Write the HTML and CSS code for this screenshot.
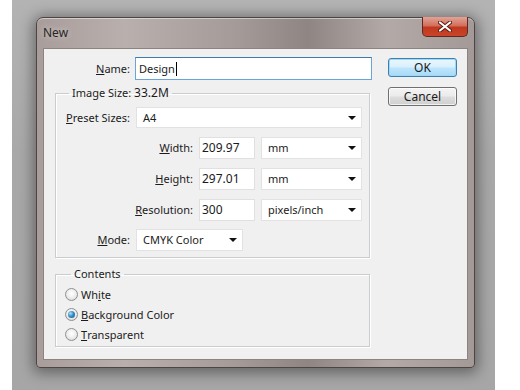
FILE: index.html
```html
<!DOCTYPE html>
<html lang="en">
<head>
  <meta charset="UTF-8">
  <title>New</title>
  <link rel="stylesheet" href="styles.css">
</head>
<body>
  <div class="desktop">
    <div class="window">
      <div class="titlebar">
        <span class="title">New</span>
        <div class="close-btn">
          <svg width="14" height="11" viewBox="0 0 14 11">
            <path d="M2 1.5 L12 9.5 M12 1.5 L2 9.5" stroke="#5a1a10" stroke-width="4" stroke-linecap="round"/>
            <path d="M2 1.5 L12 9.5 M12 1.5 L2 9.5" stroke="#ffffff" stroke-width="2.2" stroke-linecap="round"/>
          </svg>
        </div>
      </div>
      <div class="client">
        <div class="main">
          <div class="name-row">
            <label class="lbl lbl-name"><u>N</u>ame:</label>
            <div class="textbox focused">Design<span class="caret"></span></div>
          </div>

          <fieldset class="group image-size">
            <legend>Image Size: <span class="digits">33.2M</span></legend>
            <div class="row">
              <label class="lbl lbl-short"><u>P</u>reset Sizes:</label>
              <div class="select preset-sel">A4<span class="arrow"></span></div>
            </div>
            <div class="row dim">
              <label class="lbl lbl-long"><u>W</u>idth:</label>
              <div class="textbox num">209.97</div>
              <div class="select unit-sel">mm<span class="arrow"></span></div>
            </div>
            <div class="row dim">
              <label class="lbl lbl-long"><u>H</u>eight:</label>
              <div class="textbox num">297.01</div>
              <div class="select unit-sel">mm<span class="arrow"></span></div>
            </div>
            <div class="row dim">
              <label class="lbl lbl-long"><u>R</u>esolution:</label>
              <div class="textbox num">300</div>
              <div class="select unit-sel">pixels/inch<span class="arrow"></span></div>
            </div>
            <div class="row mode">
              <label class="lbl lbl-short"><u>M</u>ode:</label>
              <div class="select mode-sel">CMYK Color<span class="arrow"></span></div>
            </div>
          </fieldset>

          <fieldset class="group contents">
            <legend>Contents</legend>
            <div class="radio-row"><span class="radio"></span>Wh<u>i</u>te</div>
            <div class="radio-row"><span class="radio checked"></span><u>B</u>ackground Color</div>
            <div class="radio-row"><span class="radio"></span><u>T</u>ransparent</div>
          </fieldset>
        </div>

        <div class="buttons">
          <button class="btn btn-default">OK</button>
          <button class="btn">Cancel</button>
        </div>
      </div>
    </div>
  </div>
</body>
</html>
```

FILE: styles.css
```css
body {
  margin: 0;
  width: 520px;
  height: 390px;
  background: #ffffff;
  font-family: "Noto Sans", "Liberation Sans", sans-serif;
  font-size: 11px;
  color: #1b1b1b;
  overflow: hidden;
}

.desktop {
  margin-left: 12px;
  width: 483px;
  height: 390px;
  padding-top: 17px;
  box-sizing: border-box;
  background: linear-gradient(180deg, #b3b3b3 0%, #a8a8a8 40%, #a6a6a6 100%);
}

.window {
  margin-left: 24px;
  width: 439px;
  height: 351px;
  box-sizing: border-box;
  border: 1px solid #4e4442;
  border-radius: 7px 7px 4px 4px;
  padding: 0 6px 7px 6px;
  background: linear-gradient(90deg, #a89d9b 0%, #b9afad 20%, #a59b98 45%, #8f8583 62%, #b3aaa8 80%, #a39996 100%);
  box-shadow: 0 2px 14px 3px rgba(0, 0, 0, 0.4), inset 0 1px 0 rgba(255, 255, 255, 0.45);
}

.titlebar {
  height: 30px;
  display: flex;
}

.title {
  padding-top: 7px;
  font-size: 12px;
  line-height: 15px;
  color: #2a2523;
  text-shadow: 0 0 6px rgba(255, 255, 255, 0.6);
}

.close-btn {
  margin-left: auto;
  margin-top: -1px;
  width: 46px;
  height: 20px;
  box-sizing: border-box;
  border: 1px solid #5c2a22;
  border-top: none;
  border-radius: 0 0 5px 5px;
  background: linear-gradient(180deg, #e3a294 0%, #d2705d 45%, #c0381f 55%, #c9452a 100%);
  display: flex;
  align-items: center;
  justify-content: center;
}

.client {
  height: 312px;
  box-sizing: border-box;
  border: 1px solid #8d8381;
  background: #f0f0f0;
  padding: 8px 0 0 10px;
  display: flex;
}

.main {
  width: 318px;
}

.name-row {
  display: flex;
  align-items: center;
}

.lbl {
  text-align: right;
  flex-shrink: 0;
  line-height: 14px;
}

.lbl-name {
  width: 76px;
  margin-right: 5px;
}

.lbl-short {
  width: 67px;
  margin-right: 6px;
}

.lbl-long {
  width: 130px;
  margin-right: 6px;
}

.textbox {
  height: 22px;
  box-sizing: border-box;
  background: #ffffff;
  border: 1px solid #e0e0e0;
  padding: 0 2px;
  line-height: 20px;
  display: flex;
  align-items: center;
}

.name-row .textbox {
  width: 237px;
  height: 23px;
}

.textbox.focused {
  border-color: #6aa5d9;
  border-top-color: #3d7bad;
  padding-left: 3px;
}

.caret {
  width: 1px;
  height: 14px;
  background: #000000;
  margin-left: 1px;
}

.textbox.num {
  width: 56px;
  margin-right: 6px;
  font-size: 12px;
}

.digits {
  font-size: 12px;
}

.group {
  margin: 0 2px 0 1px;
  border: 1px solid #c9cdcf;
  box-shadow: inset 1px 1px 0 #ffffff, 1px 1px 0 #ffffff;
  padding: 0 7px;
}

.group legend {
  margin-left: 6px;
  padding: 0 3px;
  line-height: 14px;
}

.image-size {
  margin-top: 6px;
  padding-top: 7px;
  padding-bottom: 6px;
}

.row {
  display: flex;
  align-items: center;
  margin-top: 9px;
}

.row:first-of-type {
  margin-top: 0;
}

.row.mode {
  margin-top: 8px;
}

.select {
  position: relative;
  height: 22px;
  box-sizing: border-box;
  background: #ffffff;
  border: 1px solid #e2e2e2;
  padding-left: 6px;
  line-height: 20px;
}

.preset-sel {
  width: 226px;
  height: 21px;
  line-height: 19px;
}

.unit-sel {
  width: 101px;
}

.mode-sel {
  width: 107px;
}

.arrow {
  position: absolute;
  right: 5px;
  top: 50%;
  margin-top: -2px;
  width: 0;
  height: 0;
  border-left: 4px solid transparent;
  border-right: 4px solid transparent;
  border-top: 4px solid #111111;
}

.contents {
  margin-top: 9px;
  padding: 3px 9px 2px;
}

.radio-row {
  height: 20px;
  display: flex;
  align-items: center;
}

.radio {
  width: 13px;
  height: 13px;
  box-sizing: border-box;
  border-radius: 50%;
  border: 1px solid #8e8f8f;
  background: radial-gradient(circle at 50% 40%, #ffffff 0%, #ececec 55%, #c9c9c9 100%);
  margin-right: 3px;
  display: flex;
  align-items: center;
  justify-content: center;
}

.radio.checked::after {
  content: '';
  width: 7px;
  height: 7px;
  border-radius: 50%;
  background: radial-gradient(circle at 35% 35%, #a9e1fb 0%, #3a8fc6 45%, #114f7f 100%);
}

.buttons {
  margin-left: 16px;
  width: 69px;
  display: flex;
  flex-direction: column;
  padding-top: 1px;
}

.btn {
  height: 19px;
  padding: 0;
  font-family: inherit;
  font-size: 12px;
  color: #1b1b1b;
  border: 1px solid #707070;
  border-radius: 3px;
  background: linear-gradient(180deg, #f4f4f4 0%, #ebebeb 48%, #dddddd 52%, #cfcfcf 100%);
  box-shadow: inset 0 0 0 1px rgba(255, 255, 255, 0.7);
  margin-bottom: 10px;
}

.btn-default {
  border-color: #3c7fb1;
  background: linear-gradient(180deg, #eaf6fd 0%, #d9f0fc 48%, #bee6fd 52%, #a7d9f5 100%);
  box-shadow: inset 0 0 0 1px #9fd9f6;
}
```
